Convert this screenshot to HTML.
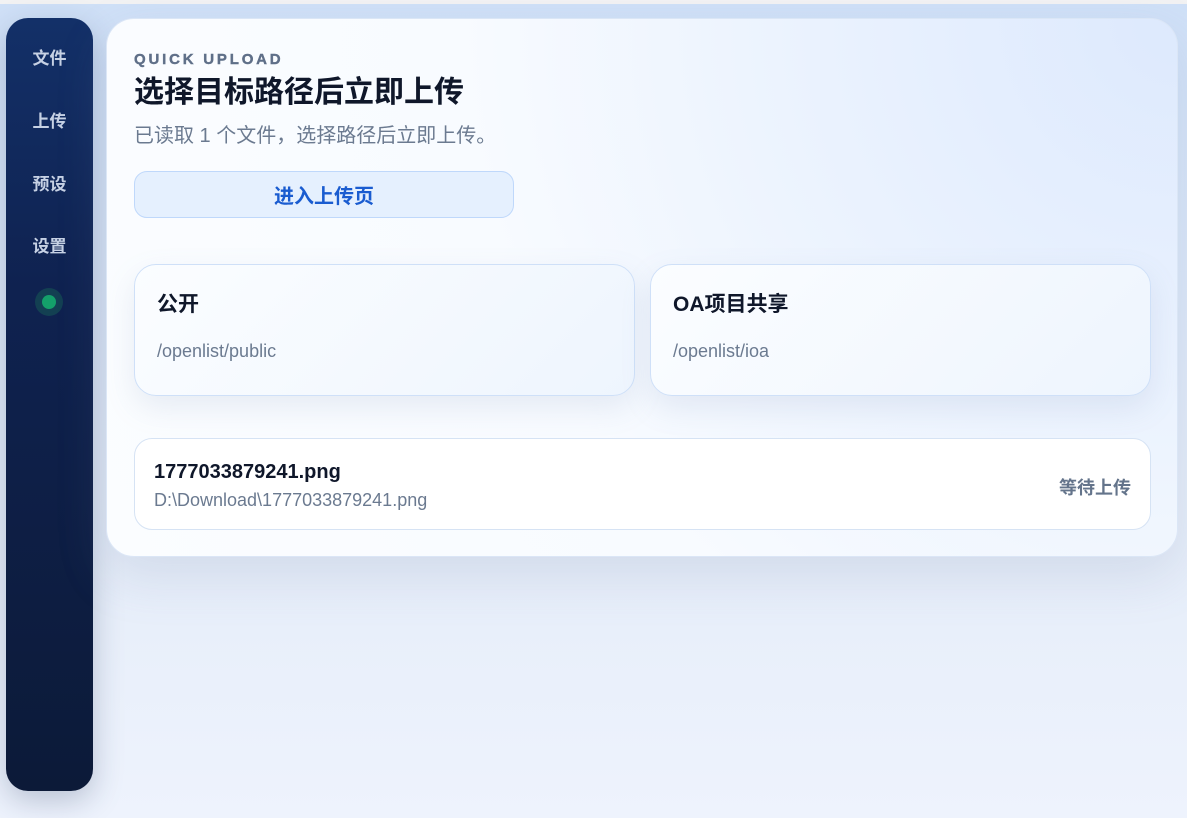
<!DOCTYPE html>
<html><head><meta charset="utf-8"><style>
*{margin:0;padding:0;box-sizing:border-box}
body{width:1187px;height:818px;overflow:hidden;position:relative;font-family:"Liberation Sans","Noto Sans CJK SC",sans-serif;background:linear-gradient(180deg,#cfe0f7 0%,#e4ecf8 60%,#eef3fd 100%)}
.top{position:absolute;left:0;top:0;width:1187px;height:4px;background:#f2f2f3}
.side{position:absolute;left:6px;top:18px;width:87px;height:773px;border-radius:22px;background:linear-gradient(180deg,#133068 0%,#0f2250 35%,#0c1a38 100%);box-shadow:0 10px 30px rgba(30,50,90,.25)}
.side .t{position:absolute;left:0;width:87px;text-align:center;color:#c6d1e4;font-weight:bold;font-size:17px;line-height:20px}
.side .dot{position:absolute;left:29px;top:270px;width:28px;height:28px;border-radius:50%;background:#134052}
.side .dot::after{content:"";position:absolute;left:7px;top:7px;width:14px;height:14px;border-radius:50%;background:#14a06a}
.card{position:absolute;left:106px;top:18px;width:1072px;height:539px;border-radius:28px;background:radial-gradient(circle at 100% 0%,#dde9fd 0%,#eaf2fe 30%,#f8fbff 60%,#fbfdff 100%);border:1px solid #dbe6f6;box-shadow:0 20px 50px rgba(120,140,180,.18)}
.eyebrow{position:absolute;left:27px;top:32px;font-size:15px;font-weight:bold;letter-spacing:2.8px;color:#5f6f88;-webkit-text-stroke:.4px #5f6f88}
h1{position:absolute;left:27px;top:55px;font-size:30px;font-weight:bold;color:#0f172a;line-height:38px}
.sub{position:absolute;left:27px;top:100px;font-size:20px;color:#6b7a90}
.btn{position:absolute;left:27px;top:152px;width:380px;height:47px;border-radius:13px;background:#e5f0fe;border:1px solid #bfd8fb;color:#1a5cd0;font-weight:bold;font-size:20px;text-align:center;line-height:50px}
.dest{position:absolute;top:245px;width:501px;height:132px;border-radius:22px;border:1px solid #cfe0f8;background:linear-gradient(135deg,#fbfdff 0%,#eef5fe 100%);box-shadow:0 12px 30px rgba(120,140,180,.15)}
.dest b{position:absolute;left:22px;top:23px;font-size:21px;color:#0f172a}
.dest span{position:absolute;left:22px;top:76px;font-size:18px;color:#6b7a90}
.file{position:absolute;left:27px;top:419px;width:1017px;height:92px;border-radius:18px;border:1px solid #d6e3f4;background:#fff}
.file b{position:absolute;left:19px;top:22px;font-size:20px;color:#0f172a}
.file span{position:absolute;left:19px;top:51px;font-size:18px;color:#6b7a90}
.file i{position:absolute;right:19px;top:35px;font-style:normal;font-weight:bold;font-size:18px;color:#64748b}
</style></head><body>
<div class="top"></div>
<div class="side">
<div class="t" style="top:31px">文件</div>
<div class="t" style="top:94px">上传</div>
<div class="t" style="top:157px">预设</div>
<div class="t" style="top:219px">设置</div>
<div class="dot"></div>
</div>
<div class="card">
<div class="eyebrow">QUICK UPLOAD</div>
<h1>选择目标路径后立即上传</h1>
<div class="sub">已读取 1 个文件，选择路径后立即上传。</div>
<div class="btn">进入上传页</div>
<div class="dest" style="left:27px"><b>公开</b><span>/openlist/public</span></div>
<div class="dest" style="left:543px"><b>OA项目共享</b><span>/openlist/ioa</span></div>
<div class="file"><b>1777033879241.png</b><span>D:\Download\1777033879241.png</span><i>等待上传</i></div>
</div>
</body></html>
